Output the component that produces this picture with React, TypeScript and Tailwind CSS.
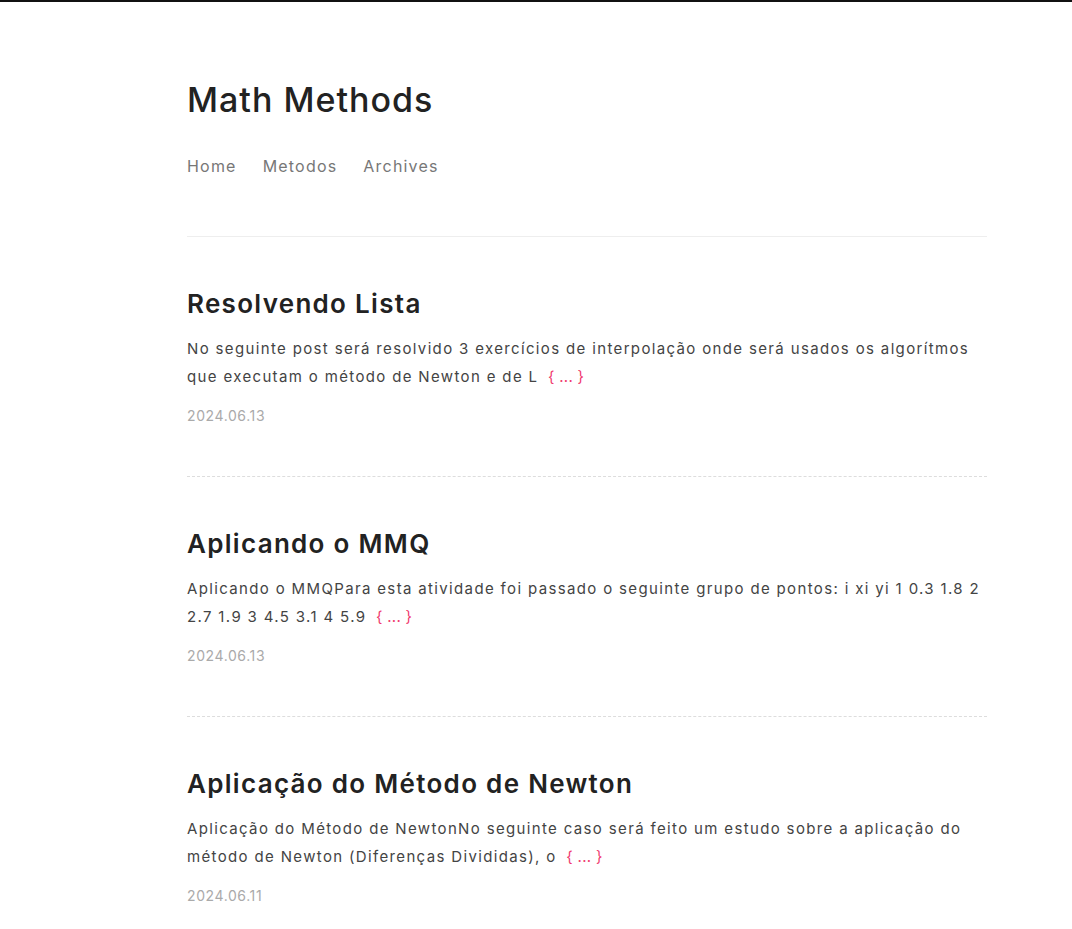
import React from 'react';

const posts = [
  {
    title: 'Resolvendo Lista',
    excerpt:
      'No seguinte post será resolvido 3 exercícios de interpolação onde será usados os algorítmos que executam o método de Newton e de L',
    date: '2024.06.13',
  },
  {
    title: 'Aplicando o MMQ',
    excerpt:
      'Aplicando o MMQPara esta atividade foi passado o seguinte grupo de pontos: i xi yi 1 0.3 1.8 2 2.7 1.9 3 4.5 3.1 4 5.9',
    date: '2024.06.13',
  },
  {
    title: 'Aplicação do Método de Newton',
    excerpt:
      'Aplicação do Método de NewtonNo seguinte caso será feito um estudo sobre a aplicação do método de Newton (Diferenças Divididas), o',
    date: '2024.06.11',
  },
];

const App = () => {
  return (
    <div className="min-h-[929px] bg-white border-t-2 border-[#111] font-['Inter',sans-serif]">
      <div className="ml-[187px] w-[800px]">
        {/* Header */}
        <header className="pt-[77px] pb-[58px] border-b border-[#eee]">
          <h1 className="text-[34px] leading-[42px] font-medium text-[#222] tracking-[1px]">
            Math Methods
          </h1>
          <nav className="mt-[33px] flex gap-[26px] text-[16px] leading-[24px] text-[#777] tracking-[1.2px]">
            <a>Home</a>
            <a>Metodos</a>
            <a>Archives</a>
          </nav>
        </header>

        {/* Posts */}
        <main>
          {posts.map((post, i) => (
            <article
              key={i}
              className={`pt-[49px] pb-[50px] ${i < posts.length - 1 ? 'border-b border-dashed border-[#ddd]' : ''}`}
            >
              <h2 className="text-[26px] leading-[36px] font-semibold text-[#222] tracking-[1.3px]">
                {post.title}
              </h2>
              <p className="mt-[13px] text-[15px] leading-[28px] text-[#444] tracking-[1.35px]">
                {post.excerpt}{' '}
                <span className="text-[#f03a6e] ml-1 tracking-[0.3px]">{'{ ... }'}</span>
              </p>
              <div className="mt-[15px] text-[14px] leading-[20px] text-[#aaa] tracking-[0.6px]">{post.date}</div>
            </article>
          ))}
        </main>
      </div>
    </div>
  );
};

export default App;
